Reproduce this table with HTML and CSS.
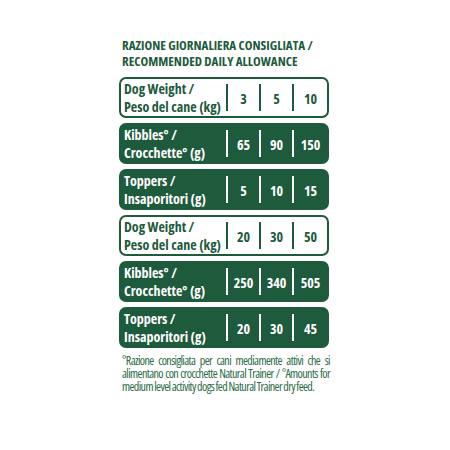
FILE: index.html
```html
<!DOCTYPE html>
<html>
<head>
<meta charset="utf-8">
<link rel="stylesheet" href="styles.css">
</head>
<body>
<div class="panel">
  <h1 class="title">RAZIONE GIORNALIERA CONSIGLIATA /<br>RECOMMENDED DAILY ALLOWANCE</h1>
  <div class="table">
    <div class="row outline">
      <div class="label">Dog Weight /<br>Peso del cane (kg)</div>
      <span class="sep"></span><div class="cell">3</div>
      <span class="sep"></span><div class="cell">5</div>
      <span class="sep"></span><div class="cell last">10</div>
    </div>
    <div class="row fill">
      <div class="label">Kibbles° /<br>Crocchette° (g)</div>
      <span class="sep"></span><div class="cell">65</div>
      <span class="sep"></span><div class="cell">90</div>
      <span class="sep"></span><div class="cell last">150</div>
    </div>
    <div class="row fill">
      <div class="label">Toppers /<br>Insaporitori (g)</div>
      <span class="sep"></span><div class="cell">5</div>
      <span class="sep"></span><div class="cell">10</div>
      <span class="sep"></span><div class="cell last">15</div>
    </div>
    <div class="row outline">
      <div class="label">Dog Weight /<br>Peso del cane (kg)</div>
      <span class="sep"></span><div class="cell">20</div>
      <span class="sep"></span><div class="cell">30</div>
      <span class="sep"></span><div class="cell last">50</div>
    </div>
    <div class="row fill">
      <div class="label">Kibbles° /<br>Crocchette° (g)</div>
      <span class="sep"></span><div class="cell">250</div>
      <span class="sep"></span><div class="cell">340</div>
      <span class="sep"></span><div class="cell last">505</div>
    </div>
    <div class="row fill">
      <div class="label">Toppers /<br>Insaporitori (g)</div>
      <span class="sep"></span><div class="cell">20</div>
      <span class="sep"></span><div class="cell">30</div>
      <span class="sep"></span><div class="cell last">45</div>
    </div>
  </div>
  <p class="note">°Razione consigliata per cani mediamente attivi che si alimentano con crocchette Natural Trainer / °Amounts for medium level activity dogs fed Natural Trainer dry feed.</p>
</div>
</body>
</html>
```
FILE: styles.css
```css
html, body {
  margin: 0;
  padding: 0;
  background: #ffffff;
}
body {
  width: 450px;
  height: 450px;
  font-family: "Open Sans", "Roboto Condensed", sans-serif;
  font-stretch: 75%;
  color: #1e5a3c;
}
.panel {
  padding: 37px 0 0 119px;
  width: 210px;
}
.title {
  margin: 0 0 8px 3px;
  font-size: 13px;
  line-height: 16px;
  font-weight: bold;
  color: #1e5a3c;
  white-space: nowrap;
}
.table {
  display: flex;
  flex-direction: column;
  gap: 5px;
}
.row {
  display: flex;
  height: 41px;
  box-sizing: border-box;
  border-radius: 7px;
  font-weight: bold;
}
.row.outline {
  border: 2px solid #1e5a3c;
  background: #ffffff;
  color: #1e5a3c;
}
.row.fill {
  background: #1e5a3c;
  color: #ffffff;
  border: 2px solid #1e5a3c;
}
.label {
  flex: none;
  width: 102px;
  display: flex;
  align-items: center;
  padding-left: 3px;
  font-size: 14px;
  line-height: 18px;
  white-space: nowrap;
  overflow: hidden;
}
.sep {
  flex: none;
  width: 2px;
  margin: 5px 0;
  background: currentColor;
}
.cell {
  flex: none;
  width: 31px;
  display: flex;
  align-items: center;
  justify-content: center;
  font-size: 14px;
  padding-top: 1px;
}
.cell.last {
  width: 33px;
}
.note {
  margin: 6px 0 0 3px;
  width: 208px;
  font-size: 12px;
  line-height: 13px;
  letter-spacing: -0.6px;
  word-spacing: -0.3px;
  text-align: justify;
  color: #2a6a44;
}
```
